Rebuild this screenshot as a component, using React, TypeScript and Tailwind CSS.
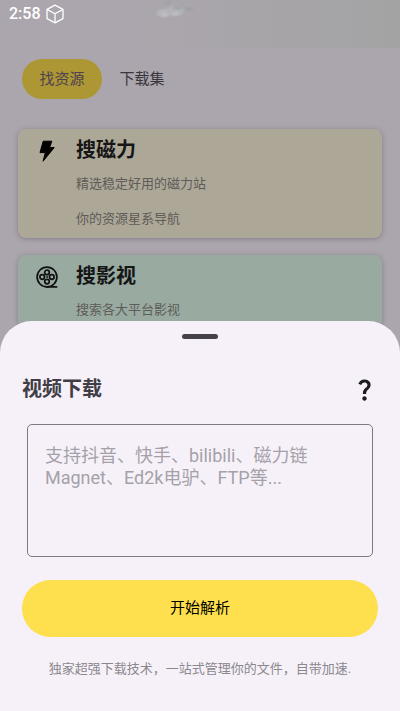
import type { ReactNode } from "react";
import { MdQuestionMark } from "react-icons/md";

type ResourceCardProps = {
  icon: ReactNode;
  title: string;
  lines: string[];
  className: string;
};

function CubeIcon() {
  return (
    <svg
      viewBox="0 0 20 20"
      className="size-5"
      fill="none"
      stroke="#fff"
      strokeWidth="1.3"
      strokeLinejoin="round"
      aria-hidden="true"
    >
      <path d="M10 1.2 18 5.4v9.2l-8 4.2-8-4.2V5.4z" />
      <path d="m2 5.4 8 4.4 8-4.4M10 9.8v9" />
    </svg>
  );
}

function BoltIcon() {
  return (
    <svg
      viewBox="0 0 24 24"
      className="size-6"
      fill="#000"
      stroke="#000"
      strokeWidth="1"
      strokeLinejoin="round"
      aria-hidden="true"
    >
      <path d="M8.2 2.2h8.6L14.6 8.6h4.6L8.1 22.2l2.2-8.6H5z" />
    </svg>
  );
}

function FilmReelIcon() {
  return (
    <svg
      viewBox="0 0 24 24"
      className="size-6"
      fill="none"
      stroke="#111"
      strokeWidth="1.7"
      strokeLinecap="round"
      aria-hidden="true"
    >
      <circle cx="12" cy="12" r="9.9" />
      <circle cx="12" cy="7.4" r="2.3" />
      <circle cx="12" cy="16.6" r="2.3" />
      <circle cx="7.2" cy="12" r="2.3" />
      <circle cx="16.8" cy="12" r="2.3" />
      <circle cx="12" cy="12" r="0.4" strokeWidth="1" />
      <path d="M12 21.9h9.6" />
    </svg>
  );
}

function ResourceCard({ icon, title, lines, className }: ResourceCardProps) {
  return (
    <a
      href="#"
      className={`flex rounded-lg pt-px pb-0.5 shadow-[0_1px_5px_rgba(60,50,65,0.35)] ${className}`}
    >
      <span className="flex h-[42px] w-[58px] shrink-0 items-center justify-center">{icon}</span>
      <span>
        <h2 className="h-9 text-xl leading-10 font-bold text-[#161616]">{title}</h2>
        {lines.map((line) => (
          <p key={line} className="text-[13px] leading-[35px] text-[#5e5b58]">
            {line}
          </p>
        ))}
      </span>
    </a>
  );
}

/**
 * Home screen, already in its dimmed colours behind the sheet.
 */
function HomeScreen() {
  return (
    <main className="min-h-screen bg-[#aba6ad]">
      <header className="flex h-12 bg-linear-to-r from-[#aba6ad] from-35% to-[#a3a3a4]">
        <div className="flex h-7 w-[155px] items-center gap-1 pl-[9px]">
          <span className="text-base font-medium text-white">2:58</span>
          <CubeIcon />
        </div>
        <svg viewBox="0 0 44 20" className="h-5 w-11" aria-hidden="true">
          <defs>
            <filter id="soft">
              <feGaussianBlur stdDeviation="1.2" />
            </filter>
          </defs>
          <g filter="url(#soft)">
            <ellipse cx="9" cy="13" rx="7" ry="4" fill="#b6b8bb" />
            <ellipse cx="20" cy="11" rx="9" ry="5" fill="#b3b4b7" />
            <path d="M10 4 16 2M18 8h8M30 9h8" stroke="#989ca0" strokeWidth="2" />
            <path d="M7 15h6M17 14h7" stroke="#c4c5c9" strokeWidth="2" />
          </g>
        </svg>
      </header>

      <nav className="flex px-[22px] pt-[11px] text-[15px]">
        <button type="button" className="h-10 w-20 rounded-full bg-[#ad9735] text-[#4d4050]">
          找资源
        </button>
        <button type="button" className="h-10 w-20 text-[#39363c]">
          下载集
        </button>
      </nav>

      <div className="flex flex-col gap-[17px] px-[18px] pt-[30px]">
        <ResourceCard
          icon={<BoltIcon />}
          title="搜磁力"
          lines={["精选稳定好用的磁力站", "你的资源星系导航"]}
          className="bg-[#ada797]"
        />
        <ResourceCard
          icon={<FilmReelIcon />}
          title="搜影视"
          lines={["搜索各大平台影视"]}
          className="bg-[#99aaa1]"
        />
      </div>
    </main>
  );
}

function DownloadSheet() {
  return (
    <section
      role="dialog"
      aria-labelledby="sheet-title"
      className="w-full rounded-t-[32px] bg-[#f6f1f9] px-[22px] pt-[13px] pb-8"
    >
      <div className="mx-auto h-[5px] w-9 rounded-full bg-[#45424b]" />
      <div className="mt-8 flex h-9 items-center justify-between">
        <h1 id="sheet-title" className="text-xl font-bold text-[#403d45]">
          <label htmlFor="links">视频下载</label>
        </h1>
        <button type="button" aria-label="帮助">
          <MdQuestionMark className="size-[27px] text-[#1c1b1f]" />
        </button>
      </div>
      <div className="mt-[17px] px-[5px]">
        <textarea
          id="links"
          placeholder={"支持抖音、快手、bilibili、磁力链Magnet、Ed2k电驴、FTP等..."}
          className="block h-[133px] w-full resize-none rounded-[5px] border border-[#7d7882] px-[17px] pt-5 text-lg leading-[22px] text-[#1c1b1f] outline-none placeholder:text-[#a5a1a8]"
        />
      </div>
      <button
        type="submit"
        className="mt-[23px] h-[57px] w-full rounded-full bg-[#fedf4d] text-[15px] text-black"
      >
        开始解析
      </button>
      <p className="mt-[22px] text-center text-[13px] leading-5 text-[#8b888d]">
        独家超强下载技术，一站式管理你的文件，自带加速.
      </p>
    </section>
  );
}

export default function App() {
  return (
    <div className="font-['Roboto','Noto_Sans_CJK_SC',sans-serif]" lang="zh-CN">
      <HomeScreen />
      <div className="fixed inset-0 flex items-end">
        <DownloadSheet />
      </div>
    </div>
  );
}
